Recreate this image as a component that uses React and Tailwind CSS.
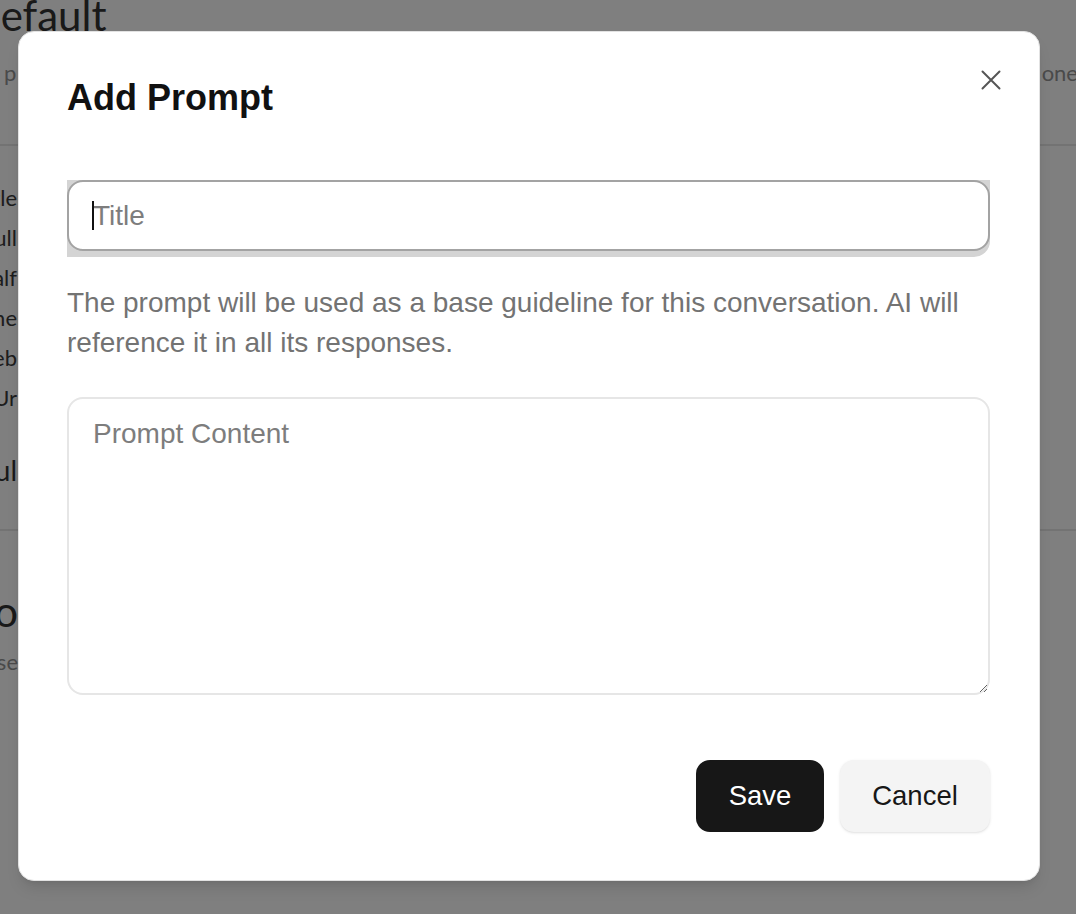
import React from "react";

export default function App() {
  const listItems = ["Title", "Full", "Half", "None", "Web", "Ur"];

  return (
    <div
      className="relative h-[914px] w-full overflow-hidden bg-white"
      style={{ fontFamily: "Lato, 'Open Sans', sans-serif" }}
    >
      {/* Background page */}
      <div className="flex flex-col">
        <div className="-ml-[31px] -mt-[8px] text-[42px] leading-[46px] text-[#333333]">
          Default
        </div>
        <div className="mt-[21px] flex justify-between text-[22px] leading-[28px] text-[#949494]">
          <span className="ml-[4px]">p</span>
          <span className="-mr-[2px]">one</span>
        </div>
        <div className="mt-[57px] border-t-2 border-[#e6e6e6]" />
        <div className="mt-[32px] flex w-[17px] flex-col items-end">
          {listItems.map((t, i) => (
            <div
              key={i}
              className="h-[40px] whitespace-nowrap text-[22px] leading-[40px] text-[#3a3a3a]"
            >
              {t}
            </div>
          ))}
          <div className="mt-[36px] h-[32px] whitespace-nowrap text-[28px] leading-[32px] text-[#333333]">
            Useful
          </div>
        </div>
        <div className="mt-[43px] border-t-2 border-[#e6e6e6]" />
        <div className="mt-[57px] flex w-[18px] flex-col items-end">
          <div className="whitespace-nowrap text-[42px] leading-[46px] text-[#333333]">
            Info
          </div>
          <div className="mt-[14px] whitespace-nowrap text-[22px] leading-[28px] text-[#949494]">
            Use
          </div>
        </div>
      </div>

      {/* Overlay + modal */}
      <div className="absolute inset-0 flex items-start bg-black/50 pl-[18px] pt-[31px]">
        <div
          className="relative flex w-[1022px] flex-col rounded-[16px] border border-[#e2e2e2] bg-white pb-[48px] pl-[48px] pr-[49px] pt-[44px] shadow-lg"
          style={{ fontFamily: "'Liberation Sans', Arial, sans-serif" }}
        >
          <button className="absolute right-[38px] top-[38px] flex h-[20px] w-[20px] items-center justify-center">
            <svg width="20" height="20" viewBox="0 0 20 20" fill="none">
              <path
                d="M1.5 1.5 18.5 18.5M18.5 1.5 1.5 18.5"
                stroke="#555555"
                strokeWidth="2"
                strokeLinecap="round"
              />
            </svg>
          </button>

          <h2 className="text-[36px] font-bold leading-[44px] text-[#111111]">
            Add Prompt
          </h2>

          <div className="mt-[60px] h-[77px] rounded-br-[16px] bg-[#d4d4d4]">
            <div className="relative">
              <input
                type="text"
                placeholder="Title"
                className="h-[71px] w-full rounded-[16px] border-2 border-[#a3a3a3] bg-white px-[24px] text-[28px] text-[#111111] caret-transparent outline-none placeholder:text-[#7d7d7d]"
              />
              <span className="pointer-events-none absolute left-[25px] top-[21px] h-[29px] w-[2px] bg-[#111111]" />
            </div>
          </div>

          <p className="mt-[26px] text-[28px] leading-[40px] text-[#737373]">
            The prompt will be used as a base guideline for this conversation. AI
            will reference it in all its responses.
          </p>

          <textarea
            placeholder="Prompt Content"
            className="mt-[34px] h-[298px] w-full rounded-[16px] border-2 border-[#e6e6e6] bg-white px-[24px] pt-[15px] text-[28px] leading-[40px] text-[#111111] outline-none placeholder:text-[#7d7d7d]"
          />

          <div className="mt-[65px] flex justify-end gap-[16px]">
            <button className="h-[72px] w-[128px] rounded-[14px] bg-[#171717] text-[27.5px] text-white">
              Save
            </button>
            <button className="h-[72px] w-[150px] rounded-[14px] bg-[#f4f4f4] text-[27.5px] text-[#171717] shadow-sm">
              Cancel
            </button>
          </div>
        </div>
      </div>
    </div>
  );
}
